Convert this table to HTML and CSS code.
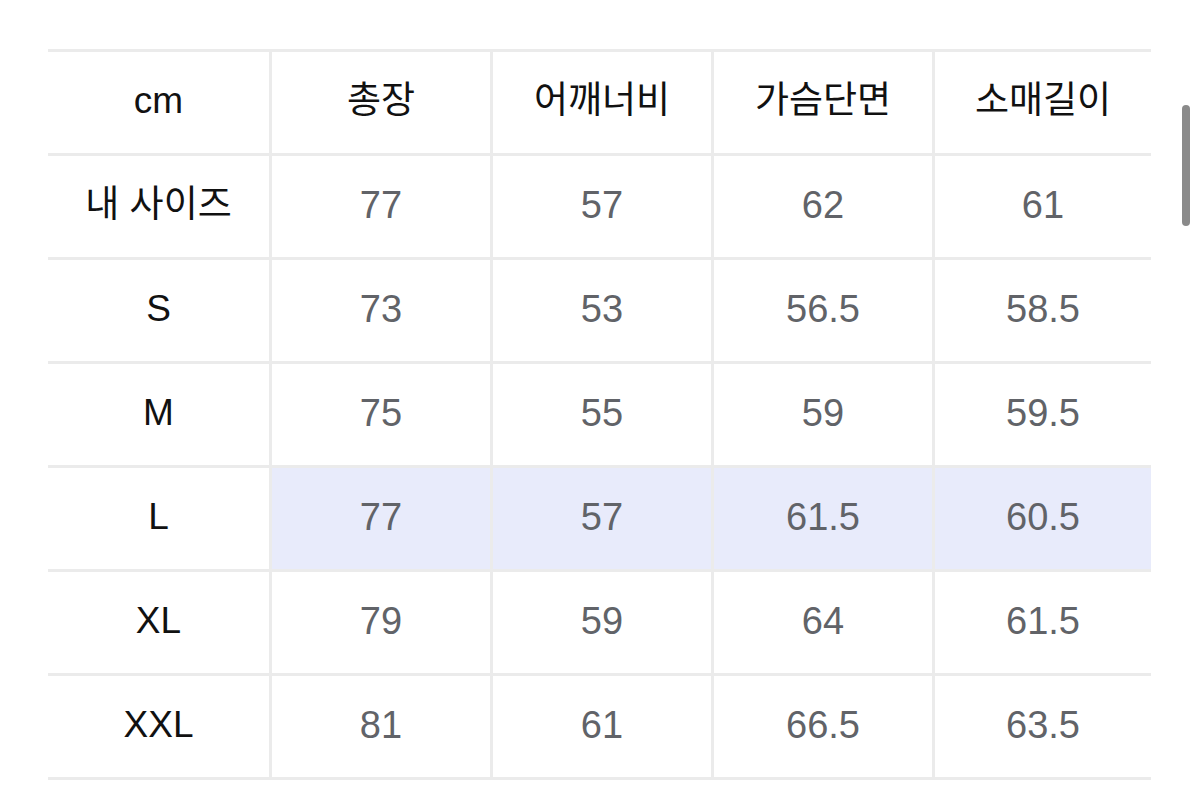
FILE: index.html
```html
<!DOCTYPE html>
<html lang="ko">
<head>
<meta charset="utf-8">
<title>사이즈 표</title>
<link rel="stylesheet" href="styles.css">
</head>
<body>
<div class="page">
  <div class="size-table">
    <div class="cell head">cm</div>
    <div class="cell head">총장</div>
    <div class="cell head">어깨너비</div>
    <div class="cell head">가슴단면</div>
    <div class="cell head">소매길이</div>

    <div class="cell label">내 사이즈</div>
    <div class="cell val">77</div>
    <div class="cell val">57</div>
    <div class="cell val">62</div>
    <div class="cell val">61</div>

    <div class="cell label">S</div>
    <div class="cell val">73</div>
    <div class="cell val">53</div>
    <div class="cell val">56.5</div>
    <div class="cell val">58.5</div>

    <div class="cell label">M</div>
    <div class="cell val">75</div>
    <div class="cell val">55</div>
    <div class="cell val">59</div>
    <div class="cell val">59.5</div>

    <div class="cell label">L</div>
    <div class="cell val hl">77</div>
    <div class="cell val hl">57</div>
    <div class="cell val hl">61.5</div>
    <div class="cell val hl">60.5</div>

    <div class="cell label">XL</div>
    <div class="cell val">79</div>
    <div class="cell val">59</div>
    <div class="cell val">64</div>
    <div class="cell val">61.5</div>

    <div class="cell label">XXL</div>
    <div class="cell val">81</div>
    <div class="cell val">61</div>
    <div class="cell val">66.5</div>
    <div class="cell val">63.5</div>
  </div>
  <div class="scroll-thumb"></div>
</div>
</body>
</html>
```
FILE: styles.css
```css
html, body {
  margin: 0;
  padding: 0;
  background: #ffffff;
  overflow: hidden;
}

.page {
  position: relative;
  width: 1200px;
  height: 788px;
  padding: 49px 0 0 48px;
  box-sizing: border-box;
  font-family: "Liberation Sans", "Noto Sans CJK KR", sans-serif;
}

.size-table {
  width: 1103px;
  display: grid;
  grid-template-columns: 221px 218px 218px 218px 1fr;
  grid-auto-rows: 101px;
  gap: 3px;
  padding: 3px 0;
  background: #ebebeb;
}

.cell {
  background: #ffffff;
  display: flex;
  align-items: center;
  justify-content: center;
  font-size: 37px;
  line-height: 1;
  padding-bottom: 4px;
  box-sizing: border-box;
}

.head,
.label {
  color: #111111;
  font-weight: 400;
}

.val {
  color: #616368;
  font-size: 38px;
}

.hl {
  background: #e8ebfb;
}

.scroll-thumb {
  position: absolute;
  left: 1182px;
  top: 105px;
  width: 8px;
  height: 121px;
  border-radius: 4px;
  background: #8a8a8a;
}
```
